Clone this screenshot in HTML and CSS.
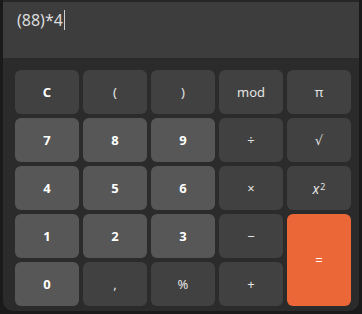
FILE: index.html
```html
<!DOCTYPE html>
<html lang="en">
<head>
    <meta charset="UTF-8">
    <title>Calculator</title>
    <link rel="stylesheet" href="styles.css">
</head>
<body>
    <div class="window">
        <div class="display">
            <span class="expr">(88)*4</span><span class="caret"></span>
        </div>
        <div class="keypad">
            <button class="key">C</button>
            <button class="key op">(</button>
            <button class="key op">)</button>
            <button class="key op">mod</button>
            <button class="key op">π</button>

            <button class="key num">7</button>
            <button class="key num">8</button>
            <button class="key num">9</button>
            <button class="key op">÷</button>
            <button class="key op">√</button>

            <button class="key num">4</button>
            <button class="key num">5</button>
            <button class="key num">6</button>
            <button class="key op">×</button>
            <button class="key op"><i>x</i><sup>2</sup></button>

            <button class="key num">1</button>
            <button class="key num">2</button>
            <button class="key num">3</button>
            <button class="key op">−</button>
            <button class="key op equals">=</button>

            <button class="key num">0</button>
            <button class="key op">,</button>
            <button class="key op">%</button>
            <button class="key op">+</button>
        </div>
    </div>
</body>
</html>
```

FILE: styles.css
```css
* {
    margin: 0;
    padding: 0;
    box-sizing: border-box;
}

body {
    background: #1a1a1a;
    font-family: "Noto Sans", "DejaVu Sans", sans-serif;
    width: 362px;
    height: 314px;
    overflow: hidden;
}

.window {
    margin-left: 3px;
    width: 356px;
    height: 311px;
    background: #2b2b2b;
    border-top: 2px solid #262626;
    border-radius: 0 0 10px 10px;
    overflow: hidden;
}

.display {
    height: 56px;
    background: #3d3d3d;
    padding: 6px 0 0 14px;
    display: flex;
    align-items: flex-start;
}

.expr {
    color: #dcdcdc;
    font-size: 16px;
    line-height: 24px;
}

.caret {
    width: 1px;
    height: 20px;
    margin-top: 2px;
    margin-left: 1px;
    background: #cfcfcf;
}

.keypad {
    display: grid;
    grid-template-columns: repeat(5, 64px);
    grid-template-rows: repeat(5, 44px);
    gap: 4px;
    padding: 12px 0 0 12px;
}

.key {
    border: none;
    border-radius: 6px;
    background: #414141;
    color: #ffffff;
    font-family: inherit;
    font-size: 13px;
    font-weight: 700;
    display: flex;
    align-items: center;
    justify-content: center;
}

.key.num {
    background: #575757;
}

.key.op {
    font-weight: 400;
    color: #e4e4e4;
}

.key sup {
    font-size: 9px;
    margin-left: 1px;
    position: relative;
    top: -2px;
}

.key i {
    font-size: 14px;
}

.key.equals {
    grid-column: 5;
    grid-row: 4 / span 2;
    background: #ec6737;
    color: #ffffff;
}
```
